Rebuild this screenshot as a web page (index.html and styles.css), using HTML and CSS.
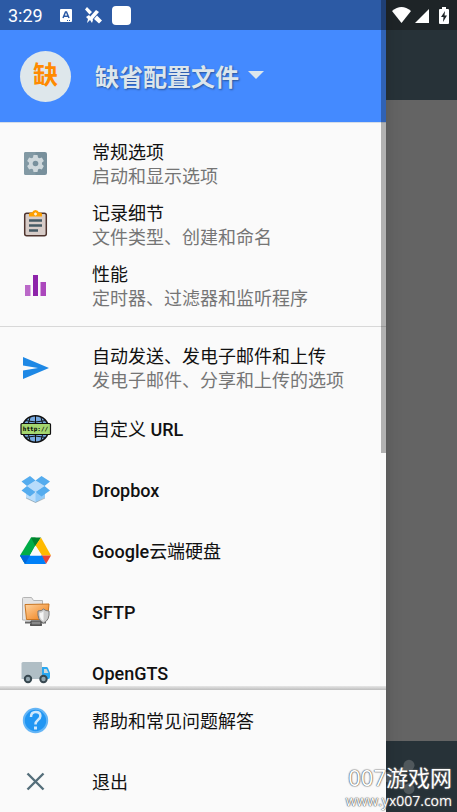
FILE: index.html
```html
<!DOCTYPE html>
<html lang="zh-CN">
  <head>
    <meta charset="UTF-8" />
    <meta name="viewport" content="width=device-width, initial-scale=1.0" />
    <title>缺省配置文件</title>
    <link rel="stylesheet" href="styles.css">
  </head>
  <body>
    <div class="screen">
      <header class="app-bar">
        <div class="status-right">
          <svg width="19" height="16" viewBox="0 0 19 16"><path d="M0 4Q9.500-4 19 4L9.500 16Z" fill="#fff"/></svg>
          <svg width="14" height="15" viewBox="0 0 14 15"><path d="M14 1V15H0Z" fill="#fff"/></svg>
          <svg class="battery" width="10" height="17" viewBox="0 0 10 17">
            <path d="M3 0h4v2h2q1 0 1 1v13q0 1-1 1H1q-1 0-1-1V3q0-1 1-1h2z" fill="#fff"/>
            <path d="M6 4 2 10h2.500L4 15l4-6.500H5.500z" fill="#1e2427"/>
          </svg>
        </div>
      </header>
      <main class="app-body"></main>
      <footer class="bottom-bar">
        <button class="share" type="button" aria-label="分享">
          <svg width="40" height="40" viewBox="0 0 24 24" fill="#50585c">
            <path d="M18 5 6 12l12 7" fill="none" stroke="#50585c" stroke-width="2"/>
            <circle cx="18" cy="5" r="3.300"/><circle cx="6" cy="12" r="3.300"/><circle cx="18" cy="19" r="3.300"/>
          </svg>
        </button>
      </footer>
    </div>

    <aside class="drawer">
      <div class="status-left">
        <span class="clock">3:29</span>
        <svg width="12" height="13" viewBox="0 0 12 13">
          <rect width="12" height="13" rx="1" fill="#fff"/>
          <path d="M3 9 5.500 3h1L9 9M4 7.200h4" fill="none" stroke="#2c5aa5" stroke-width="1.500"/>
          <path d="M7 11.500h1m1 0h1" stroke="#2c5aa5"/>
        </svg>
        <svg class="satellite" width="17" height="17" viewBox="0 0 17 17" fill="#fff">
          <path d="m2 0 5 5-2.500 2.500L0 2.500zM12 8.500l5 5-3 3-5-4.500zM11 3l3 2-7 8-3-2z"/>
          <path d="m1 10 3-2 4 5-1 3-2-3-3 3 1-4z"/>
        </svg>
        <span class="blank-icon"></span>
      </div>

      <div class="profile">
        <span class="avatar">缺</span>
        <button class="profile-name" type="button">缺省配置文件<span class="caret"></span></button>
      </div>

      <nav class="menu">
        <div class="section">
          <a class="row" href="#">
            <svg class="icon" viewBox="0 0 32 32">
              <rect x="4" y="4" width="23" height="23" rx="2" fill="#78909c"/>
              <path d="M6 4h9.500v23H6q-2 0-2-2V6q0-2 2-2z" fill="#8299a4"/>
              <g fill="#cfd8dc">
                <circle cx="15.500" cy="15.500" r="6.500"/>
                <path d="M13.500 7h4l.8 4h-5.600zM13.500 24h4l.8-4h-5.600z"/>
                <path d="M13.500 7h4l.8 4h-5.600zM13.500 24h4l.8-4h-5.600z" transform="rotate(60 15.500 15.500)"/>
                <path d="M13.500 7h4l.8 4h-5.600zM13.500 24h4l.8-4h-5.600z" transform="rotate(120 15.500 15.500)"/>
              </g>
              <circle cx="15.500" cy="15.500" r="2.800" fill="#78909c"/>
            </svg>
            <span class="text"><span class="name">常规选项</span><span class="desc">启动和显示选项</span></span>
          </a>
          <a class="row" href="#">
            <svg class="icon" viewBox="0 0 32 32">
              <rect x="4.700" y="4.200" width="21.600" height="22.600" rx="2" fill="#d7ccc8" stroke="#4e342e" stroke-width="1.500"/>
              <path d="M9 7.500V5q0-1.500 2-1.500h1q1-2.500 3.500-2.500T19 3.500h1q2 0 2 1.500v2.500z" fill="#ffa000"/>
              <path d="M14 5h3M15.500 3.500v3" stroke="#fff3e0" stroke-width="1.300"/>
              <path d="M9 11.500h13M9 16.500h13M9 21.500h9" stroke="#455a64" stroke-width="2.400"/>
            </svg>
            <span class="text"><span class="name">记录细节</span><span class="desc">文件类型、创建和命名</span></span>
          </a>
          <a class="row" href="#">
            <svg class="icon" viewBox="0 0 32 32">
              <path d="M5 15h5.500v11H5z" fill="#ba68c8"/>
              <path d="M13 5h5v21h-5z" fill="#8e24aa"/>
              <path d="M20.500 12H26v14h-5.500z" fill="#ab47bc"/>
            </svg>
            <span class="text"><span class="name">性能</span><span class="desc">定时器、过滤器和监听程序</span></span>
          </a>
        </div>

        <div class="section">
          <a class="row" href="#">
            <svg class="icon" viewBox="0 0 32 32"><path d="m3 5 26 11L3 27v-8.500L18 16 3 13.500z" fill="#1e88e5"/></svg>
            <span class="text"><span class="name">自动发送、发电子邮件和上传</span><span class="desc">发电子邮件、分享和上传的选项</span></span>
          </a>
          <a class="row" href="#">
            <svg class="icon" viewBox="0 0 32 32">
              <circle cx="15.500" cy="16" r="13.300" fill="#76a9e0" stroke="#111" stroke-width="1.500"/>
              <path d="M15.500 3v26M5 7.500q10.500 3 21 0M5 24.500q10.500-3 21 0M10 4.500q-4 11.500 0 23M21 4.500q4 11.500 0 23" fill="none" stroke="#111"/>
              <rect x="1" y="10.500" width="29.500" height="11" rx="1" fill="#a5d66f" stroke="#111" stroke-width="1.200"/>
              <text class="http" x="15.500" y="18" text-anchor="middle">http://</text>
            </svg>
            <span class="text"><span class="name">自定义 <span class="latin">URL</span></span></span>
          </a>
          <a class="row" href="#">
            <svg class="icon" viewBox="0 0 32 32">
              <path d="M6 19v4.500l9.500 5 9.500-5V19z" fill="#90caf9"/>
              <path d="M15.500 17v11.500l-9.500-5V19z" fill="#bbdefb"/>
              <path d="m7 12 8.500-5.500L24.500 12l-9 6z" fill="#b8dcfb"/>
              <path d="m10 2 5.500 4.500L7 12l-5.500-4.500zM21.500 2 30 7.500 24.500 12l-9-5.500zM7 12l8.500 6-5.500 4.500-8.500-6zM24.500 12l5.500 4.500-8.500 6-6-4.500z" fill="#55acee"/>
              <path d="m6 24 9.500 4.500L25 24" fill="none" stroke="#78909c" opacity=".6"/>
            </svg>
            <span class="text"><span class="name latin">Dropbox</span></span>
          </a>
          <a class="row" href="#">
            <svg class="icon" viewBox="0 0 32 32">
              <path d="M11 2.500h4.500v8L5 29 0 20.500z" fill="#00ac47"/>
              <path d="M11 2.500h10l-5.500 9z" fill="#00832d"/>
              <path d="m21 2.500 10 18H22l-6.500-10z" fill="#ffba00"/>
              <path d="M31 20.500 26 29l-5-8.500z" fill="#ea4335"/>
              <path d="M0 20.500h22l4 8.500H5z" fill="#0080f8"/>
              <path d="m10 20.500 5.500-10 6 10z" fill="#fafafa"/>
              <path d="M0 20.500h10L5 29z" fill="#0066da"/>
            </svg>
            <span class="text"><span class="name"><span class="latin">Google</span>云端硬盘</span></span>
          </a>
          <a class="row" href="#">
            <svg class="icon" viewBox="0 0 32 32">
              <defs>
                <linearGradient id="folder" x2="1" y2="1"><stop stop-color="#ffd4a0"/><stop offset="1" stop-color="#ee7a10"/></linearGradient>
              </defs>
              <path d="M2.500 24V2.500q0-1 1-1h8l2 3h9v20z" fill="#e4e4e4" stroke="#b4b4b4"/>
              <path d="m5 8.500 24-.5-1.500 15.500H6.500z" fill="url(#folder)" stroke="#c87522"/>
              <path d="M5 26.500h21M10 29h12" stroke="#666" stroke-width="2"/>
              <path d="M11 25h10v4H11z" fill="#888" stroke="#444"/>
              <path d="M18 15q4 0 5.500-2 2 2 5.500 2 1 9-5.500 12Q17 24 18 15z" fill="#ccc" stroke="#777"/>
              <path d="M23.500 15v10q-4-2-4-8 3 0 4-2z" fill="#f5f5f5"/>
            </svg>
            <span class="text"><span class="name latin">SFTP</span></span>
          </a>
          <a class="row" href="#">
            <svg class="icon" viewBox="0 0 32 32">
              <path d="M3 5h19v17H1.500V6.500Q1.500 5 3 5z" fill="#b0bec5"/>
              <path d="M22 10h4.500q1 0 1.500 1l2 5v4q0 2-1.500 2H22z" fill="#29a8f2"/>
              <path d="M24 12h2.500l2 4H24z" fill="#cfd8dc"/>
              <circle cx="8" cy="22" r="3.200" fill="#90a4ae" stroke="#37474f" stroke-width="2"/>
              <circle cx="23.500" cy="22" r="3.200" fill="#90a4ae" stroke="#37474f" stroke-width="2"/>
            </svg>
            <span class="text"><span class="name latin">OpenGTS</span></span>
          </a>
        </div>
      </nav>

      <div class="drawer-footer">
        <a class="row" href="#">
          <svg class="icon" viewBox="0 0 32 32">
            <circle cx="15.500" cy="15.500" r="11.700" fill="#2196f3" stroke="#64b5f6" stroke-width="2"/>
            <path d="M11 12q0-5 4.700-5t4.700 4q0 2-2.500 4t-2.400 4.500" fill="none" stroke="#cfe8fc" stroke-width="2.500"/>
            <path d="M14 21.500h3v3h-3z" fill="#cfe8fc"/>
          </svg>
          <span class="text"><span class="name">帮助和常见问题解答</span></span>
        </a>
        <a class="row" href="#">
          <svg class="icon" viewBox="0 0 32 32"><path d="m7.500 7.500 16 16m0-16-16 16" stroke="#546e7a" stroke-width="2.400"/></svg>
          <span class="text"><span class="name">退出</span></span>
        </a>
      </div>
      <span class="scroll-thumb"></span>
    </aside>

    <div class="watermark">
      <span class="mark-name"><span class="mark-num">007</span>游戏网</span>
      <span class="mark-url">www.yx007.com</span>
    </div>
  </body>
</html>
```
FILE: styles.css
```css
* {
  box-sizing: border-box;
}

body {
  margin: 0;
  font-family: Roboto, 'Noto Sans CJK SC', sans-serif;
  overflow: hidden;
}

button {
  border: 0;
  padding: 0;
  background: none;
  font-family: inherit;
}

a {
  color: inherit;
  text-decoration: none;
}

svg {
  display: block;
  flex-shrink: 0;
}

/* screen behind the drawer */
.screen {
  display: flex;
  flex-direction: column;
  height: 100vh;
  background: #646464;
}

.app-bar {
  height: 100px;
  background: #273238;
}

.status-right {
  display: flex;
  justify-content: flex-end;
  align-items: center;
  height: 30px;
  padding-right: 8px;
  gap: 4px;
  background: #1e2427;
}

.battery {
  margin-left: 6px;
}

.app-body {
  flex: 1;
}

.bottom-bar {
  display: flex;
  justify-content: flex-end;
  align-items: center;
  height: 71px;
  padding-right: 38px;
  background: #273238;
}

/* drawer */
.drawer {
  position: absolute;
  top: 0;
  left: 0;
  display: flex;
  flex-direction: column;
  width: calc(100% - 71px);
  height: 100vh;
  background: #fafafa;
  box-shadow: 0 0 16px rgba(0, 0, 0, 0.15);
}

.status-left {
  display: flex;
  align-items: center;
  flex-shrink: 0;
  height: 30px;
  padding-left: 8px;
  gap: 13px;
  color: #fff;
  background: #2c5aa5;
}

.clock {
  margin-right: 4px;
  font-size: 18px;
}

.blank-icon {
  width: 19px;
  height: 19px;
  border-radius: 4px;
  background: #fff;
}

.satellite {
  margin-right: -3px;
}

.profile {
  display: flex;
  align-items: center;
  flex-shrink: 0;
  height: 93px;
  padding-left: 20px;
  gap: 24px;
  background: #448aff;
  border-bottom: 1px solid #d5dde8;
}

.avatar {
  width: 51px;
  height: 51px;
  border-radius: 50%;
  background: #dee7eb;
  color: #ff8a00;
  font-size: 25px;
  font-weight: 700;
  line-height: 49px;
  text-align: center;
}

.profile-name {
  display: flex;
  align-items: center;
  gap: 9px;
  padding-bottom: 2px;
  color: #dce6ec;
  font-size: 24px;
  font-weight: 700;
  text-shadow: 1px 1px 2px rgba(0, 0, 0, 0.4);
}

.caret {
  border: 8px solid transparent;
  border-top-color: #dce6ec;
  border-bottom: 0;
}

.menu {
  flex: 1;
  min-height: 0;
  overflow: hidden;
}

.section {
  padding: 10px 0;
}

.section + .section {
  border-top: 1px solid #d8d8d8;
}

.row {
  display: flex;
  align-items: center;
  height: 61px;
  padding-left: 20px;
  gap: 40px;
}

.icon {
  width: 32px;
  height: 32px;
}

.text {
  display: flex;
  flex-direction: column;
  padding-top: 2px;
  font-size: 18px;
  line-height: 24px;
  white-space: nowrap;
}

.name {
  color: #111;
}

.latin {
  font-weight: 500;
}

.desc {
  color: #757575;
}

.http {
  font: bold 6px 'DejaVu Sans Mono', monospace;
}

.drawer-footer {
  position: relative;
  flex-shrink: 0;
}

.drawer-footer::before {
  content: '';
  position: absolute;
  bottom: 100%;
  width: 100%;
  height: 4px;
  background: linear-gradient(#e6e6e6, #bdbdbd);
}

.scroll-thumb {
  position: absolute;
  top: 0;
  right: 0;
  width: 5px;
  height: calc(56vh - 2px);
  background: rgba(0, 0, 0, 0.29);
}

.watermark {
  position: absolute;
  right: 5px;
  bottom: 3px;
  display: flex;
  flex-direction: column;
  align-items: flex-end;
  color: #fff;
  text-shadow: 0 0 1px #555, 0 0 1px #555, 0 0 2px #888;
}

.mark-name {
  font-size: 22px;
  line-height: 28px;
}

.mark-num {
  font-family: 'Open Sans', sans-serif;
}

.mark-url {
  font-family: 'Open Sans', sans-serif;
  font-size: 14px;
  line-height: 16px;
}
```
